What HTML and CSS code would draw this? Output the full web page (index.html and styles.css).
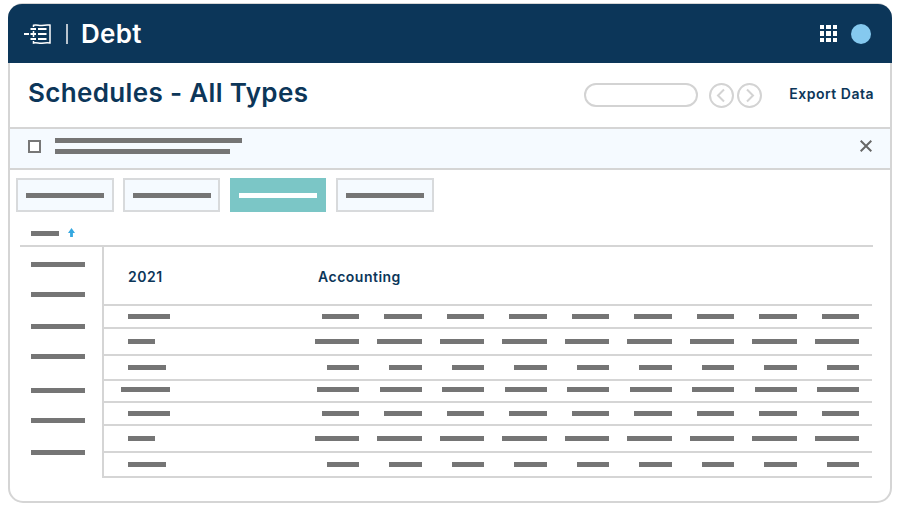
FILE: index.html
```html
<!DOCTYPE html>
<html lang="en">
<head>
<meta charset="utf-8">
<title>Debt - Schedules</title>
<link rel="stylesheet" href="styles.css">
</head>
<body>
<div class="card">
  <header class="topbar">
    <svg class="logo" viewBox="0 0 27 20" fill="none" stroke="#fff">
      <path d="M9.500 3V1.300C13 .4 15 2 18 1.400c3-.5 5-.6 8-.3v17.800c-3-.3-5-.2-8 .3-3 .6-5-1-8.500-.1V17M9.500 7v6" stroke-width="1.500"/>
      <path d="M0 10h5M6.500 10h5.500M6.500 5h5.500M6.500 15h5.500M14 5h8.500M14 10h8.500M14 15h8.500" stroke-width="1.900"/>
    </svg>
    <span class="divider"></span>
    <span class="app-name">Debt</span>
    <span class="spacer"></span>
    <span class="apps">
      <i></i><i></i><i></i><i></i><i></i><i></i><i></i><i></i><i></i>
    </span>
    <span class="avatar"></span>
  </header>

  <section class="titlebar">
    <h1>Schedules - All Types</h1>
    <span class="spacer"></span>
    <span class="search"></span>
    <span class="pager">
      <svg viewBox="0 0 25 25" fill="none" stroke="#d3d3d3" stroke-width="2"><circle cx="12.500" cy="12.500" r="11.500"/><path d="M15 6.500 9 12.500l6 6"/></svg>
      <svg viewBox="0 0 25 25" fill="none" stroke="#d3d3d3" stroke-width="2"><circle cx="12.500" cy="12.500" r="11.500"/><path d="M10 6.500l6 6-6 6"/></svg>
    </span>
    <span class="export">Export Data</span>
  </section>

  <section class="notice">
    <span class="checkbox"></span>
    <div class="notice-lines">
      <span class="bar w187"></span>
      <span class="bar w175"></span>
    </div>
    <span class="spacer"></span>
    <svg class="close" viewBox="0 0 12 12" stroke="#666" stroke-width="2"><path d="M.7.7l10.600 10.600M11.300.7.7 11.300"/></svg>
  </section>

  <nav class="tabs">
    <div class="tab"><span class="bar w78"></span></div>
    <div class="tab tab-narrow"><span class="bar w78"></span></div>
    <div class="tab active"><span class="bar w78"></span></div>
    <div class="tab"><span class="bar w78"></span></div>
  </nav>

  <div class="sort">
    <span class="bar w28"></span>
    <svg class="arrow" viewBox="0 0 7 9" fill="#35a8e0"><path d="M3.500 0 7 5H4.900V9H2.100V5H0z"/></svg>
  </div>

  <div class="data">
    <aside class="side">
      <span class="bar w54"></span><span class="bar w54"></span><span class="bar w54"></span><span class="bar w54"></span><span class="bar w54"></span><span class="bar w54"></span><span class="bar w54"></span>
    </aside>
    <div class="table">
      <div class="thead"><span class="year">2021</span><span class="group">Accounting</span></div>

      <div class="row r1"><span class="bar w42"></span>
        <span class="bar w37"></span><span class="bar w37"></span><span class="bar w37"></span><span class="bar w37"></span><span class="bar w37"></span><span class="bar w37"></span><span class="bar w37"></span><span class="bar w37"></span><span class="bar w37"></span></div>
      <div class="row r2"><span class="bar w27"></span>
        <span class="bar w44"></span><span class="bar w44"></span><span class="bar w44"></span><span class="bar w44"></span><span class="bar w44"></span><span class="bar w44"></span><span class="bar w44"></span><span class="bar w44"></span><span class="bar w44"></span></div>
      <div class="row r3"><span class="bar w38"></span>
        <span class="bar w33"></span><span class="bar w33"></span><span class="bar w33"></span><span class="bar w33"></span><span class="bar w33"></span><span class="bar w33"></span><span class="bar w33"></span><span class="bar w33"></span><span class="bar w33"></span></div>
      <div class="row r4"><span class="bar w49 outdent"></span>
        <span class="bar w42"></span><span class="bar w42"></span><span class="bar w42"></span><span class="bar w42"></span><span class="bar w42"></span><span class="bar w42"></span><span class="bar w42"></span><span class="bar w42"></span><span class="bar w42"></span></div>
      <div class="row r5"><span class="bar w42"></span>
        <span class="bar w37"></span><span class="bar w37"></span><span class="bar w37"></span><span class="bar w37"></span><span class="bar w37"></span><span class="bar w37"></span><span class="bar w37"></span><span class="bar w37"></span><span class="bar w37"></span></div>
      <div class="row r6"><span class="bar w27"></span>
        <span class="bar w44"></span><span class="bar w44"></span><span class="bar w44"></span><span class="bar w44"></span><span class="bar w44"></span><span class="bar w44"></span><span class="bar w44"></span><span class="bar w44"></span><span class="bar w44"></span></div>
      <div class="row r7"><span class="bar w38"></span>
        <span class="bar w33"></span><span class="bar w33"></span><span class="bar w33"></span><span class="bar w33"></span><span class="bar w33"></span><span class="bar w33"></span><span class="bar w33"></span><span class="bar w33"></span><span class="bar w33"></span></div>
    </div>
  </div>
</div>
</body>
</html>
```
FILE: styles.css
```css
* { box-sizing: border-box; }
html, body { height: 100%; }
body {
  margin: 0;
  padding: 3px 8px 0;
  background: #fff;
  font-family: Inter, "Liberation Sans", sans-serif;
  color: #0c3659;
  overflow: hidden;
}
.card {
  height: 500px;
  border: 2px solid #d5d5d5;
  border-radius: 15px;
  background: #fff;
}
.spacer { flex: 1; }

.topbar {
  display: flex;
  align-items: center;
  height: 59px;
  margin: -1px -2px 0;
  padding: 0 21px 0 16px;
  background: #0c3659;
  border-radius: 14px 14px 0 0;
}
.logo { width: 27px; height: 20px; flex: none; }
.divider { width: 2px; height: 20px; margin: 0 13px 0 15px; background: #b9c4ce; }
.app-name { font-size: 26px; font-weight: 600; color: #fff; letter-spacing: .3px; }
.apps {
  display: grid;
  grid-template-columns: repeat(3, 4.400px);
  grid-auto-rows: 4.400px;
  gap: 1.900px;
  margin-right: 14px;
}
.apps i { background: #fff; }
.avatar { width: 20px; height: 20px; border-radius: 50%; background: #85c9ef; }

.titlebar {
  display: flex;
  align-items: center;
  height: 66px;
  padding: 0 16px 0 18px;
  border-bottom: 2px solid #d5d5d5;
}
h1 { margin: 0 0 5px; font-size: 26px; font-weight: 600; letter-spacing: .35px; }
.search { width: 114px; height: 24px; border: 2px solid #d3d3d3; border-radius: 12px; }
.pager { display: flex; gap: 3px; margin: 0 27px 0 11px; }
.pager svg { width: 25px; height: 25px; }
.export { margin-bottom: 3px; font-size: 14px; font-weight: 600; letter-spacing: .5px; }

.notice {
  display: flex;
  align-items: center;
  height: 41px;
  padding: 0 18px 5px;
  background: #f5faff;
  border-bottom: 2px solid #d5d5d5;
}
.checkbox { width: 13px; height: 13px; border: 2.500px solid #777; background: #fff; }
.notice-lines { display: flex; flex-direction: column; gap: 6px; margin-left: 14px; }
.close { width: 12px; height: 12px; }

.bar { display: block; height: 5px; background: #757575; flex: none; }
.w187 { width: 187px; } .w175 { width: 175px; }
.w78 { width: 78px; } .w54 { width: 54px; } .w49 { width: 49px; }
.w44 { width: 44.500px; } .w42 { width: 42px; } .w38 { width: 38px; }
.w37 { width: 37.500px; } .w33 { width: 32.500px; } .w28 { width: 28px; } .w27 { width: 27px; }

.tabs { display: flex; gap: 10px; padding: 8px 0 0 6px; }
.tab {
  display: flex;
  align-items: center;
  justify-content: center;
  width: 98px;
  height: 34px;
  background: #f5faff;
  border: 2px solid #d8dadc;
}
.tab:first-child { margin-right: -1px; }
.tab-narrow { width: 97px; }
.tab.active { width: 96px; background: #7bc6c6; border: 0; }
.tab.active .bar { background: #fff; }

.sort { display: flex; align-items: center; gap: 9px; height: 33px; padding: 9px 0 0 21px; }
.arrow { width: 7px; height: 9px; margin-top: -2px; }

.data {
  display: flex;
  margin: 0 17px 0 10px;
  border-top: 2px solid #d5d5d5;
}
.side {
  width: 83.500px;
  flex: none;
  padding: 15px 0 0 11px;
  border-right: 2px solid #d5d5d5;
}
.side .bar { margin-top: 25px; }
.side .bar:first-child { margin-top: 0; }
.side .bar:nth-child(3), .side .bar:nth-child(7) { margin-top: 27px; }
.side .bar:nth-child(5) { margin-top: 29px; }

.table { flex: 1; margin-right: 1px; }
.thead {
  display: flex;
  align-items: center;
  height: 59px;
  padding: 2px 0 0 24.500px;
  font-size: 14px;
  font-weight: 600;
  letter-spacing: .5px;
  border-bottom: 2px solid #d5d5d5;
}
.year { width: 190px; }
.row {
  display: grid;
  grid-template-columns: 193px repeat(9, 62.500px);
  align-items: center;
  justify-items: end;
  border-bottom: 2px solid #d5d5d5;
}
.row > .bar:first-child { justify-self: start; margin-left: 24px; }
.row > .bar.outdent { margin-left: 17.500px; }
.r1, .r5 { height: 23px; }
.r2, .r6 { height: 27px; }
.r3, .r7 { height: 25px; }
.r3 { height: 24.500px; }
.r4 { height: 22.500px; padding-bottom: 3px; }
```
